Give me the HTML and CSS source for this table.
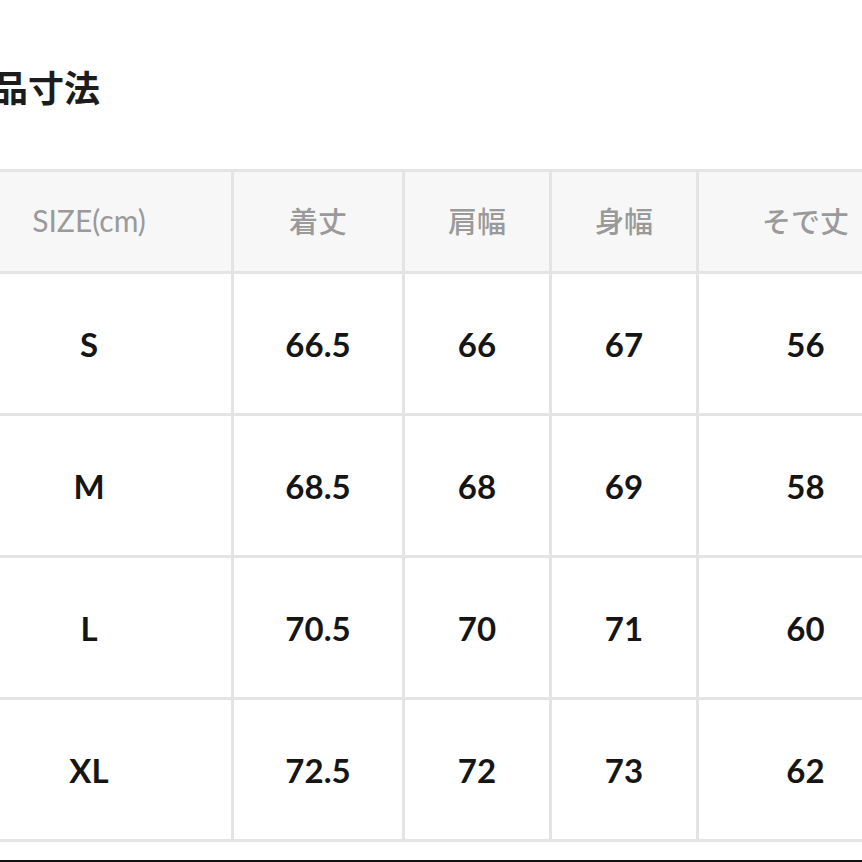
FILE: index.html
```html
<!DOCTYPE html>
<html lang="ja">
<head>
<meta charset="utf-8">
<title>商品寸法</title>
<link rel="stylesheet" href="styles.css">
</head>
<body>
<div class="page">
  <h2 class="title">商品寸法</h2>
  <div class="size-table">
    <div class="cell head latin">SIZE(cm)</div>
    <div class="cell head">着丈</div>
    <div class="cell head">肩幅</div>
    <div class="cell head">身幅</div>
    <div class="cell head">そで丈</div>

    <div class="cell">S</div>
    <div class="cell">66.5</div>
    <div class="cell">66</div>
    <div class="cell">67</div>
    <div class="cell">56</div>

    <div class="cell">M</div>
    <div class="cell">68.5</div>
    <div class="cell">68</div>
    <div class="cell">69</div>
    <div class="cell">58</div>

    <div class="cell">L</div>
    <div class="cell">70.5</div>
    <div class="cell">70</div>
    <div class="cell">71</div>
    <div class="cell">60</div>

    <div class="cell">XL</div>
    <div class="cell">72.5</div>
    <div class="cell">72</div>
    <div class="cell">73</div>
    <div class="cell">62</div>
  </div>
  <div class="rule"></div>
</div>
</body>
</html>
```
FILE: styles.css
```css
html, body {
  margin: 0;
  padding: 0;
  background: #ffffff;
}

.page {
  width: 862px;
  height: 862px;
  overflow: hidden;
  padding-top: 68px;
  box-sizing: border-box;
  font-family: Lato, "Noto Sans CJK JP", sans-serif;
}

.title {
  margin: 0 0 65px -44px;
  font-family: "Noto Sans CJK JP", sans-serif;
  font-size: 36px;
  line-height: 36px;
  font-weight: 700;
  color: #1c1c1c;
  white-space: nowrap;
}

.size-table {
  margin-left: -56px;
  width: 971px;
  box-sizing: border-box;
  display: grid;
  grid-template-columns: 284px 168px 144px 144px 213px;
  grid-template-rows: 99px 139px 139px 139px 139px;
  gap: 3px;
  padding: 3px;
  background: #e4e4e4;
}

.cell {
  background: #ffffff;
  display: flex;
  align-items: center;
  justify-content: center;
  font-family: Lato, "Noto Sans CJK JP", sans-serif;
  font-weight: 700;
  font-size: 33px;
  color: #151515;
}

.cell.head {
  background: #f7f7f7;
  font-family: "Noto Sans CJK JP", sans-serif;
  font-weight: 500;
  font-size: 29px;
  color: #9a9a9a;
  padding-bottom: 4px;
}

.cell.head.latin {
  font-family: Lato, sans-serif;
  font-weight: 400;
  font-size: 30px;
}

.rule {
  margin-top: 18px;
  height: 2px;
  background: #111111;
}
```
